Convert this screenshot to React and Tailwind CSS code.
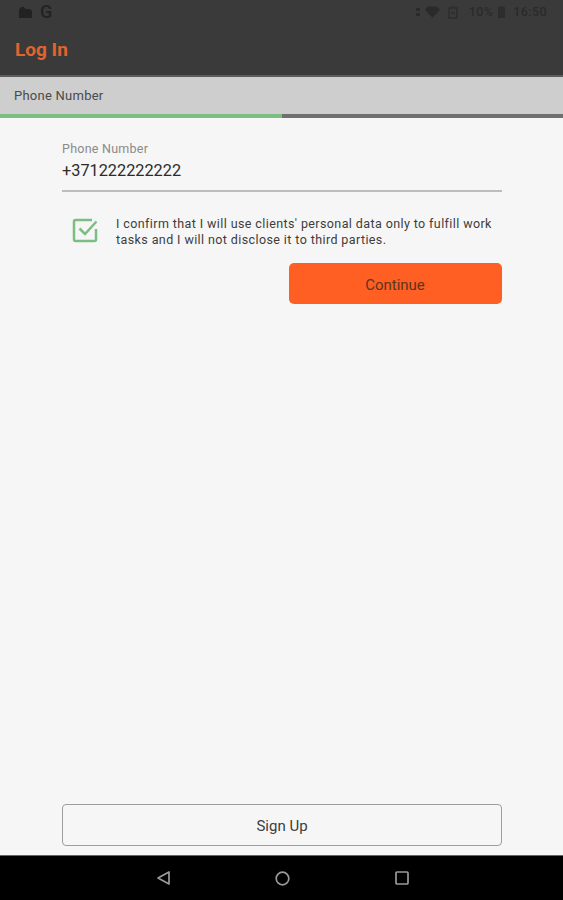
const GREEN = '#7cbd84'

function StatusBar() {
  return (
    <div className="h-[24px] flex items-center justify-between pl-[18px] pr-[16px] text-[#222]">
      <div className="flex items-center gap-[7px]">
        <svg width="15" height="12" viewBox="0 0 15 12" fill="currentColor">
          <path d="M1 12V4l2-3h3l1.500 2H12l2 2v7z" />
        </svg>
        <span className="text-[18px] font-medium leading-none">G</span>
      </div>
      <div className="flex items-center text-[12.500px] leading-none font-medium text-[#2a2a2a] tracking-[0.4px]">
        <svg width="4" height="10" viewBox="0 0 4 10" fill="currentColor" className="mr-[5px]">
          <rect x="0" y="1" width="4" height="3" />
          <rect x="0" y="6" width="4" height="3" />
        </svg>
        <svg width="15" height="12" viewBox="0 0 16 12" fill="currentColor" className="mr-[8px]">
          <path d="M0 3.500 3.500 0h9L16 3.500 8 12z" />
        </svg>
        <svg width="10" height="13" viewBox="0 0 10 13" fill="none" stroke="currentColor" strokeWidth="1.500" className="mr-[11px] opacity-70">
          <rect x="1" y="2" width="8" height="10" />
          <path d="M3.500 1h3M3 7h4" />
        </svg>
        <span className="mr-[5px]">10%</span>
        <svg width="7" height="12" viewBox="0 0 7 12" fill="currentColor" className="mr-[8px] opacity-80">
          <path d="M2 0h3v1h2v11H0V1h2z" />
        </svg>
        <span>16:50</span>
      </div>
    </div>
  )
}

function BottomNav() {
  return (
    <div className="h-[45px] bg-black border-t border-[#666] flex items-center justify-center gap-[105px] pl-[3px] text-[#9a9a9a]">
      <svg width="13" height="14" viewBox="0 0 13 14" fill="none" stroke="currentColor" strokeWidth="1.700">
        <path d="M12 1v12L1 7z" strokeLinejoin="round" />
      </svg>
      <svg width="15" height="15" viewBox="0 0 15 15" fill="none" stroke="currentColor" strokeWidth="1.700">
        <circle cx="7.500" cy="7.500" r="6.300" />
      </svg>
      <svg width="14" height="14" viewBox="0 0 14 14" fill="none" stroke="currentColor" strokeWidth="1.700">
        <rect x="1" y="1" width="12" height="12" rx="1" />
      </svg>
    </div>
  )
}

function CheckMark() {
  return (
    <svg width="26" height="26" viewBox="0 0 26 26" fill="none" stroke={GREEN} strokeWidth="2.500">
      <path d="M24 12v10.500a1.500 1.500 0 0 1-1.500 1.500h-19A1.500 1.500 0 0 1 2 22.500v-18A1.500 1.500 0 0 1 3.500 3H20" />
      <path d="M7.500 11.500 13 17 24.500 4.500" />
    </svg>
  )
}

export default function App() {
  return (
    <div className="w-[563px] h-[900px] flex flex-col bg-[#f6f6f6] overflow-hidden font-['Roboto',sans-serif]">
      <header className="h-[77px] bg-[#3a3a3a] border-b-2 border-[#5c5c5c]">
        <StatusBar />
        <div className="pl-[15px] pt-[14px] text-[19px] leading-[24px] font-bold text-[#e0642e]">Log In</div>
      </header>

      <div className="h-[37px] bg-[#cecece] flex items-center pl-[14px] text-[13px] tracking-[0.25px] text-[#4a4a4a]">
        Phone Number
      </div>
      <div className="h-[4px] flex">
        <div className="w-[282px] bg-[#7cbd84]" />
        <div className="flex-1 bg-[#6f6f6f]" />
      </div>

      <main className="flex-1 flex flex-col pl-[62px] pr-[61px]">
        <div className="pt-[23px]">
          <div className="text-[12.500px] leading-[15px] tracking-[0.25px] text-[#8a8a8a]">Phone Number</div>
          <div className="mt-[3px] text-[16.300px] leading-[24px] text-[#2b2b2b] pb-[7px] border-b-2 border-[#bdbdbd]">
            +371222222222
          </div>
        </div>

        <div className="mt-[24px] flex items-start">
          <div className="ml-[10px] mt-[1px] shrink-0">
            <CheckMark />
          </div>
          <p className="ml-[18px] text-[12.500px] leading-[16px] tracking-[0.4px] text-[#3d3d3d]">
            I confirm that I will use clients' personal data only to fulfill work<br />
            tasks and I will not disclose it to third parties.
          </p>
        </div>

        <div className="mt-[15px] flex justify-end">
          <button className="w-[213px] h-[41px] rounded-[5px] pt-[3px] pr-[1px] bg-[#ff5f22] text-[15px] text-[#5e3320]">
            Continue
          </button>
        </div>

        <button className="mt-auto mb-[9px] h-[42px] rounded-[4px] border-[1.500px] pt-[2px] border-[#9e9e9e] text-[15px] text-[#3d3d3d]">
          Sign Up
        </button>
      </main>

      <BottomNav />
    </div>
  )
}
